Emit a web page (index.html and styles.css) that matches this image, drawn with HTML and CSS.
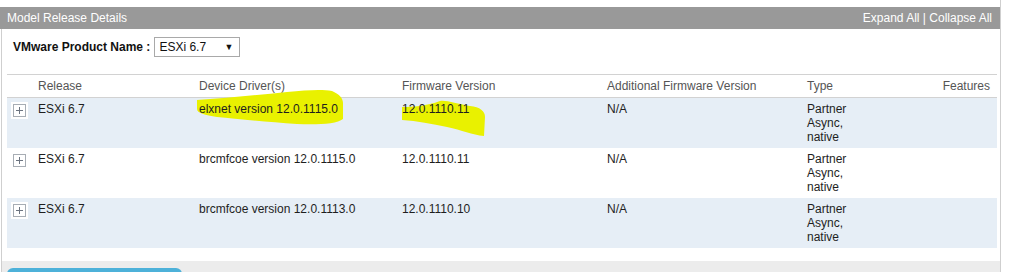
FILE: index.html
```html
<!DOCTYPE html>
<html>
<head>
<meta charset="utf-8">
<link rel="stylesheet" href="styles.css">
</head>
<body>
<div class="page">
  <div class="titlebar">
    <span class="title">Model Release Details</span>
    <span class="actions">Expand All | Collapse All</span>
  </div>
  <div class="panel">
    <div class="filter">
      <span class="filter-label">VMware Product Name :</span>
      <div class="select"><span>ESXi 6.7</span><span class="arrow">▼</span></div>
    </div>
    <table class="releases">
      <colgroup>
        <col class="c-icon"><col class="c-rel"><col class="c-drv"><col class="c-fw"><col class="c-add"><col class="c-type"><col class="c-feat">
      </colgroup>
      <thead>
        <tr><th></th><th>Release</th><th>Device Driver(s)</th><th>Firmware Version</th><th>Additional Firmware Version</th><th>Type</th><th class="feat">Features</th></tr>
      </thead>
      <tbody>
        <tr class="alt">
          <td><span class="plus"></span></td>
          <td>ESXi 6.7</td>
          <td class="hl-cell"><svg class="hl hl1" width="150" height="40" viewBox="0 0 150 40"><path d="M0 11 C30 9 60 6 90 3 C110 1 125 0 135 2 C142 5 146 9 146 14 L146 30 C140 35 120 36 100 35 C70 33 40 30 20 28 C8 26 0 24 0 20 Z" /></svg><span class="txt">elxnet version 12.0.1115.0</span></td>
          <td class="hl-cell"><svg class="hl hl2" width="90" height="40" viewBox="0 0 90 40"><path d="M0 10 C10 10 25 9 38 4 C45 3 55 7 68 9 C78 10 83 14 83 20 L82 39 C70 38 60 33 45 30 C30 27 15 24 0 23 Z" /></svg><span class="txt">12.0.1110.11</span></td>
          <td>N/A</td>
          <td>Partner<br>Async,<br>native</td>
          <td></td>
        </tr>
        <tr>
          <td><span class="plus"></span></td>
          <td>ESXi 6.7</td>
          <td>brcmfcoe version 12.0.1115.0</td>
          <td>12.0.1110.11</td>
          <td>N/A</td>
          <td>Partner<br>Async,<br>native</td>
          <td></td>
        </tr>
        <tr class="alt">
          <td><span class="plus"></span></td>
          <td>ESXi 6.7</td>
          <td>brcmfcoe version 12.0.1113.0</td>
          <td>12.0.1110.10</td>
          <td>N/A</td>
          <td>Partner<br>Async,<br>native</td>
          <td></td>
        </tr>
      </tbody>
    </table>
    <div class="footer">
      <div class="btn"></div>
    </div>
  </div>
</div>
</body>
</html>
```

FILE: styles.css
```css
html, body {
  margin: 0;
  padding: 0;
  background: #fff;
  overflow: hidden;
}
body {
  font-family: "Liberation Sans", Arial, sans-serif;
  font-size: 12px;
  color: #222;
  height: 272px;
}
.page {
  width: 1001px;
  height: 272px;
  border-right: 1px solid #cfcfcf;
  padding-top: 7px;
  box-sizing: border-box;
  display: flex;
  flex-direction: column;
  overflow: hidden;
}
.titlebar {
  height: 22px;
  background: #999999;
  color: #fff;
  display: flex;
  align-items: center;
  justify-content: space-between;
  padding: 0 8px 0 7px;
  flex: none;
}
.panel {
  margin-left: 1px;
  border-left: 1px solid #cfcfcf;
  flex: 1;
  min-height: 0;
  display: flex;
  flex-direction: column;
}
.filter {
  display: flex;
  align-items: center;
  margin: 8px 0 0 11px;
  height: 20px;
  flex: none;
}
.filter-label {
  font-weight: bold;
  color: #111;
  margin-right: 4px;
}
.select {
  width: 86px;
  height: 20px;
  box-sizing: border-box;
  border: 1px solid #a9a9a9;
  display: flex;
  align-items: center;
  justify-content: space-between;
  padding: 0 6px 0 4px;
  color: #111;
}
.arrow {
  font-size: 9px;
}
.releases {
  margin: 17px 0 0 5px;
  width: 990px;
  border-collapse: collapse;
  table-layout: fixed;
  flex: none;
}
.c-icon { width: 26px; }
.c-rel { width: 161px; }
.c-drv { width: 203px; }
.c-fw { width: 205px; }
.c-add { width: 200px; }
.c-type { width: 110px; }
.c-feat { width: 85px; }
.releases th {
  font-weight: normal;
  color: #555;
  text-align: left;
  padding: 4px 5px;
  line-height: 14px;
  border-top: 1px solid #d2d2d2;
  border-bottom: 1px solid #d2d2d2;
}
.releases th.feat {
  text-align: right;
  padding-right: 7px;
}
.releases td {
  padding: 4px 5px;
  line-height: 14px;
  height: 42px;
  vertical-align: top;
  color: #1e1e1e;
}
.releases tr.alt td {
  background: #e6eef6;
}
.plus {
  display: block;
  width: 11px;
  height: 11px;
  margin: 2px 0 0 1px;
  border: 1px solid #a7adb4;
  background: #fff;
  box-shadow: 0 0 0 2px #fff;
  position: relative;
}
.plus::before, .plus::after {
  content: "";
  position: absolute;
  background: #6c7480;
}
.plus::before {
  left: 2px;
  top: 5px;
  width: 7px;
  height: 1px;
}
.plus::after {
  left: 5px;
  top: 2px;
  width: 1px;
  height: 7px;
}
.hl-cell {
  position: relative;
}
.hl {
  position: absolute;
  fill: #e9f100;
}
.hl1 {
  left: 3px;
  top: -9px;
}
.hl2 {
  left: 5px;
  top: -1px;
}
.txt {
  position: relative;
}
.footer {
  margin-top: 13px;
  flex: 1;
  min-height: 0;
  overflow: hidden;
  background: #ececec;
  padding: 7px 0 0 5px;
}
.btn {
  width: 175px;
  height: 20px;
  background: #4db1d9;
  border-radius: 6px 6px 0 0;
}
```
